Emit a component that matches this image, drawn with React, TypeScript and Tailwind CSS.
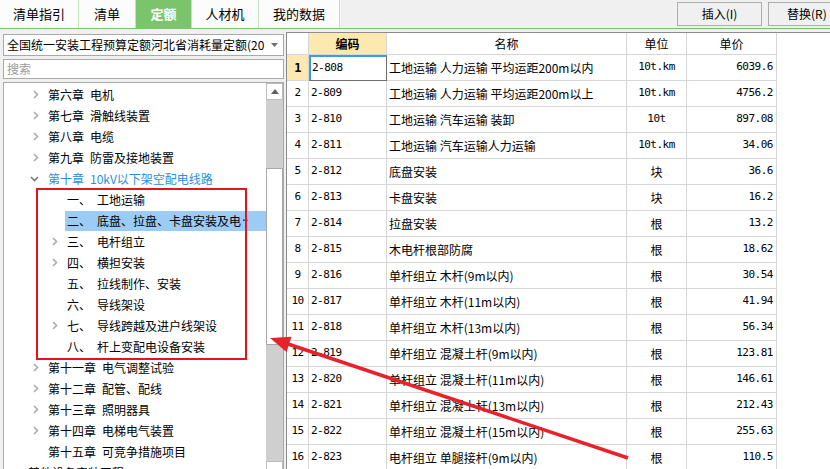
import React from "react";

type TreeItem = {
  lvl: 0 | 1;
  chev?: "right" | "down";
  label: string;
  text: string;
  blue?: boolean;
  selected?: boolean;
};

const tree: TreeItem[] = [
  { lvl: 0, chev: "right", label: "第六章", text: "电机" },
  { lvl: 0, chev: "right", label: "第七章", text: "滑触线装置" },
  { lvl: 0, chev: "right", label: "第八章", text: "电缆" },
  { lvl: 0, chev: "right", label: "第九章", text: "防雷及接地装置" },
  { lvl: 0, chev: "down", label: "第十章", text: "10kV以下架空配电线路", blue: true },
  { lvl: 1, label: "一、", text: "工地运输" },
  { lvl: 1, label: "二、", text: "底盘、拉盘、卡盘安装及电", selected: true },
  { lvl: 1, chev: "right", label: "三、", text: "电杆组立" },
  { lvl: 1, chev: "right", label: "四、", text: "横担安装" },
  { lvl: 1, label: "五、", text: "拉线制作、安装" },
  { lvl: 1, label: "六、", text: "导线架设" },
  { lvl: 1, chev: "right", label: "七、", text: "导线跨越及进户线架设" },
  { lvl: 1, label: "八、", text: "杆上变配电设备安装" },
  { lvl: 0, chev: "right", label: "第十一章", text: "电气调整试验" },
  { lvl: 0, chev: "right", label: "第十二章", text: "配管、配线" },
  { lvl: 0, chev: "right", label: "第十三章", text: "照明器具" },
  { lvl: 0, chev: "right", label: "第十四章", text: "电梯电气装置" },
  { lvl: 0, label: "第十五章", text: "可竞争措施项目" },
];

const rows: [string, string, string, string][] = [
  ["2-808", "工地运输 人力运输 平均运距200m以内", "10t.km", "6039.6"],
  ["2-809", "工地运输 人力运输 平均运距200m以上", "10t.km", "4756.2"],
  ["2-810", "工地运输 汽车运输 装卸", "10t", "897.08"],
  ["2-811", "工地运输 汽车运输人力运输", "10t.km", "34.06"],
  ["2-812", "底盘安装", "块", "36.6"],
  ["2-813", "卡盘安装", "块", "16.2"],
  ["2-814", "拉盘安装", "根", "13.2"],
  ["2-815", "木电杆根部防腐", "根", "18.62"],
  ["2-816", "单杆组立 木杆(9m以内)", "根", "30.54"],
  ["2-817", "单杆组立 木杆(11m以内)", "根", "41.94"],
  ["2-818", "单杆组立 木杆(13m以内)", "根", "56.34"],
  ["2-819", "单杆组立 混凝土杆(9m以内)", "根", "123.81"],
  ["2-820", "单杆组立 混凝土杆(11m以内)", "根", "146.61"],
  ["2-821", "单杆组立 混凝土杆(13m以内)", "根", "212.43"],
  ["2-822", "单杆组立 混凝土杆(15m以内)", "根", "255.63"],
  ["2-823", "电杆组立 单腿接杆(9m以内)", "根", "110.5"],
];

const tabs = [
  { name: "清单指引", w: "w-[79px]" },
  { name: "清单", w: "w-[57px]" },
  { name: "定额", w: "w-[56px]", active: true },
  { name: "人材机", w: "w-[67px]" },
  { name: "我的数据", w: "w-[81px]" },
];

function Chevron({ dir }: { dir: "right" | "down" }) {
  if (dir === "down") {
    return (
      <svg width="9" height="6" viewBox="0 0 9 6" className="-ml-[3px]">
        <path d="M1 1 L4.5 4.5 L8 1" stroke="#7a7a7a" strokeWidth="1.6" fill="none" />
      </svg>
    );
  }
  return (
    <svg width="6" height="9" viewBox="0 0 6 9">
      <path d="M1 1 L4.5 4.5 L1 8" stroke="#ababab" strokeWidth="1.6" fill="none" />
    </svg>
  );
}

function TopBar() {
  return (
    <div className="flex h-[29px] overflow-hidden border-b border-[#7cc36a]">
      {tabs.map((t) => (
        <div
          key={t.name}
          className={`${t.w} shrink-0 flex items-center justify-center border-r border-[#c4e4bb] text-[13px] ${
            t.active ? "bg-[#7cc46b] text-white font-bold" : "bg-[#fcfcfc] text-black"
          }`}
        >
          {t.name}
        </div>
      ))}
      <div className="ml-[337px] flex shrink-0 gap-[6px] pt-[2px]">
        <button className="h-[24px] w-[85px] shrink-0 border border-[#adadad] bg-[#f0f0f0] text-[12px]">
          插入(I)
        </button>
        <button className="h-[24px] w-[85px] shrink-0 border border-[#adadad] bg-[#f0f0f0] text-[12px] text-left pl-[18px]">
          替换(R)
        </button>
      </div>
    </div>
  );
}

function LeftPanel() {
  return (
    <div className="w-[286px] shrink-0 pl-[3px] pt-[5px] flex flex-col gap-[3px]">
      <div className="h-[22px] w-[281px] border border-[#a9a9a9] bg-white flex items-center">
        <span className="flex-1 overflow-hidden whitespace-nowrap pl-[3px] text-[12px] leading-[20px]">
          全国统一安装工程预算定额河北省消耗量定额(2017)
        </span>
        <span className="w-[18px] flex items-center justify-center">
          <svg width="7" height="4" viewBox="0 0 7 4">
            <path d="M0 0 H7 L3.5 4 Z" fill="#707070" />
          </svg>
        </span>
      </div>
      <div className="h-[22px] w-[281px] border border-[#a9a9a9] bg-white flex items-center pl-[3px] text-[12px] text-[#9a9a9a]">
        搜索
      </div>
      <div className="h-[400px] w-[281px] border border-[#a9a9a9] border-b-0 bg-white flex">
        <div className="w-[262px] pt-[1px] overflow-hidden">
          {tree.map((it) => (
            <div key={it.label} className="h-[21px] flex items-center whitespace-nowrap text-[12px]">
              {it.lvl === 0 ? (
                <>
                  <span className="ml-[29px] w-[15px] shrink-0 flex items-center">
                    {it.chev && <Chevron dir={it.chev} />}
                  </span>
                  <span className={it.blue ? "text-[#2b8fe0]" : "text-black"}>{it.label}</span>
                  <span className={`ml-[6px] ${it.blue ? "text-[#2b8fe0]" : "text-black"}`}>{it.text}</span>
                </>
              ) : (
                <>
                  <span className="ml-[48px] w-[13px] shrink-0 flex items-center">
                    {it.chev && <Chevron dir={it.chev} />}
                  </span>
                  <span
                    className={`flex-1 h-[20px] flex items-center pl-[2px] overflow-hidden ${
                      it.selected ? "bg-[#9ccbf5]" : ""
                    }`}
                  >
                    <span className="w-[30px] shrink-0">{it.label}</span>
                    <span>{it.text}</span>
                    {it.selected && (
                      <span className="font-['DejaVu_Sans',sans-serif] text-[12px] tracking-[-1px] ml-[1px]">
                        {"\u00b7\u00b7"}
                      </span>
                    )}
                  </span>
                </>
              )}
            </div>
          ))}
          <div className="h-[21px] flex items-center pl-[24px] text-[12px] whitespace-nowrap">
            其他设备安装工程
          </div>
        </div>
        <div className="w-[17px] flex flex-col bg-[#cfcfcf]">
          <div className="h-[17px] border border-[#bdbdbd] bg-white flex items-center justify-center">
            <svg width="8" height="5" viewBox="0 0 8 5">
              <path d="M0 5 L4 0 L8 5 Z" fill="#606060" />
            </svg>
          </div>
          <div className="h-[68px]" />
          <div className="h-[177px] border border-[#a8a8a8] bg-white" />
          <div className="h-[116px]" />
          <div className="h-[17px] border border-[#bdbdbd] bg-white" />
        </div>
      </div>
    </div>
  );
}

const cols = "grid grid-cols-[22px_78px_240px_60px_90px]";
const cell = "border-r border-b border-[#d6d6d6] flex items-center overflow-hidden whitespace-nowrap";
const mono = "font-['DejaVu_Sans_Mono',monospace] text-[11px] tracking-[-0.5px]";

function Grid() {
  return (
    <div className="flex-1 mt-[3px] border-l border-t border-[#8c8c8c] bg-white">
      <div className={`${cols} h-[22px] text-[12px]`}>
        <div className={`${cell}`} />
        <div className={`${cell} justify-center bg-[#fde9b0] font-bold`}>编码</div>
        <div className={`${cell} justify-center`}>名称</div>
        <div className={`${cell} justify-center`}>单位</div>
        <div className={`${cell} justify-center`}>单价</div>
      </div>
      {rows.map((r, i) => (
        <div key={r[0]} className={`${cols} h-[26px] text-[12px]`}>
          <div
            className={`${cell} justify-center ${mono} ${
              i === 0 ? "bg-[#fde9b0] font-bold text-[12px]" : ""
            }`}
          >
            {i + 1}
          </div>
          <div
            className={`${cell} ${mono} ${
              i === 0
                ? "border-2 border-t-[#3d9be0] border-l-[#3d9be0] border-r-[#6e6e6e] border-b-[#6e6e6e] pl-[1px]"
                : "pl-[2px]"
            }`}
          >
            {r[0]}
          </div>
          <div className={`${cell} pl-[2px]`}>{r[1]}</div>
          <div className={`${cell} justify-center ${r[2].startsWith("10") ? mono : ""}`}>{r[2]}</div>
          <div className={`${cell} justify-end pr-[3px] ${mono}`}>{r[3]}</div>
        </div>
      ))}
    </div>
  );
}

export default function App() {
  return (
    <div className="relative w-[830px] h-[469px] overflow-hidden bg-[#f0f0f0] font-['Noto_Sans_CJK_SC',sans-serif] text-black">
      <TopBar />
      <div className="flex h-[440px]">
        <LeftPanel />
        <Grid />
      </div>
      {/* annotation overlay */}
      <div className="absolute left-[36px] top-[188px] w-[211px] h-[172px] border-2 border-[#e3141b] pointer-events-none" />
      <svg className="absolute left-0 top-0 pointer-events-none" width="830" height="469" viewBox="0 0 830 469">
        <line x1="628" y1="458" x2="288" y2="344" stroke="#e8222a" strokeWidth="3.5" />
        <polygon points="270,338 286.5,352 291.5,336.8" fill="#e8222a" />
      </svg>
    </div>
  );
}
